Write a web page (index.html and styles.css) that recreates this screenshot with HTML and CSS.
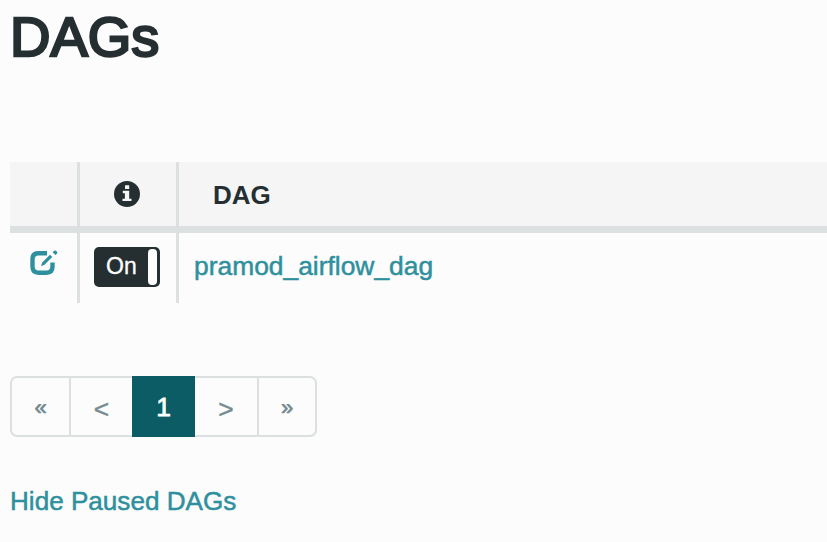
FILE: index.html
```html
<!DOCTYPE html>
<html lang="en">
<head>
<meta charset="utf-8">
<title>DAGs</title>
<link rel="stylesheet" href="styles.css">
</head>
<body>
<h1>DAGs</h1>
<table class="dags">
  <thead>
    <tr>
      <th class="col-edit"></th>
      <th class="col-state"><svg class="info" viewBox="0 0 26 26"><circle cx="13" cy="13" r="13" fill="#252f32"/><path fill="#f5f5f5" d="M11 4.200h4.200v3.800H11zM8.800 9.800h6.400v7.900h2.300V20H8.500v-2.300h2.400v-5.500H8.800z"/></svg></th>
      <th class="col-name">DAG</th>
    </tr>
  </thead>
  <tbody>
    <tr>
      <td><a class="edit" href="#"><svg viewBox="0 0 28 26"><path d="M17 3.200H8.500Q2.500 3.200 2.500 9v7.500q0 6.200 6 6.200h8q6 0 6-6.200V12.500" fill="none" stroke="#2f909d" stroke-width="4.400"/><path d="M11 16.300l1.200-3.800L20 4.700l2.300 2.300-7.800 7.800zM22.600 2.200l1.500-1.400q1-.7 1.900 0l1 1q.7.900 0 1.800L25.500 5z" fill="#2f909d"/></svg></a></td>
      <td><div class="toggle"><span class="on">On</span><span class="handle"></span></div></td>
      <td class="name"><a href="#">pramod_airflow_dag</a></td>
    </tr>
  </tbody>
</table>
<ul class="pagination">
  <li class="edge">«</li>
  <li>&lt;</li>
  <li class="active">1</li>
  <li>&gt;</li>
  <li class="edge">»</li>
</ul>
<a class="hide" href="#">Hide Paused DAGs</a>
</body>
</html>
```
FILE: styles.css
```css
* { box-sizing: border-box; }
body {
  margin: 0;
  padding: 4px 0 0 10px;
  height: 542px;
  overflow: hidden;
  background: #fcfcfc;
  color: #252f32;
  font-family: "Liberation Sans", Arial, sans-serif;
  font-size: 26.4px;
}
a { color: #2f909d; text-decoration: none; -webkit-text-stroke: 0.5px #2f909d; }
h1 {
  margin: 0 0 94px;
  height: 64px;
  font-size: 56px;
  line-height: 65px;
  font-weight: 400;
  -webkit-text-stroke: 2.500px #252f32;
}
.dags { width: 817px; table-layout: fixed; border-collapse: separate; border-spacing: 0; }
th, td { padding: 0; border-left: 3px solid #dce0e1; }
th:first-child, td:first-child { border-left: 0; }
th { height: 71px; background: #f5f5f5; border-bottom: 7px solid #dce0e1; }
td { height: 70px; }
.col-edit { width: 67px; }
.col-state { width: 99px; }
.col-name { padding: 3px 0 0 34px; text-align: left; font-size: 26px; }
.info { display: block; width: 26px; height: 26px; margin: 0 0 0 34px; }
.edit { display: block; margin: -10px 0 0 20px; height: 26px; }
.edit svg { display: block; width: 28px; height: 26px; }
.toggle {
  display: flex;
  justify-content: space-between;
  width: 66px;
  height: 40px;
  margin: -3px 0 0 14px;
  padding: 2px 3px 2px 12px;
  border-radius: 5px;
  background: #252f32;
}
.on { color: #fff; font-size: 23px; line-height: 34px; -webkit-text-stroke: 0.3px #fff; }
.handle { width: 9px; border-radius: 4px; background: #fcfcfc; }
.name { padding: 0 0 4px 15px; }
.pagination {
  display: flex;
  width: 307px;
  height: 61px;
  margin: 73px 0 0;
  padding: 0;
  list-style: none;
  border: 2px solid #dce0e1;
  border-radius: 7px;
  color: #748b90;
  line-height: 63px;
  text-align: center;
  -webkit-text-stroke: 0.4px #748b90;
}
.pagination li { flex: none; width: 63px; border-left: 2px solid #dce0e1; }
.pagination .edge { width: 58px; line-height: 60px; -webkit-text-stroke: 0.7px #748b90; font-size: 22px; }
.pagination .edge:first-child { width: 57px; border-left: 0; }
.pagination .active {
  height: 61px;
  margin-top: -2px;
  border: 0;
  background: #0b5c64;
  color: #fff;
  line-height: 62px;
  -webkit-text-stroke: 0.8px #fff;
}
.pagination .active + li { width: 62px; border-left: 0; }
.hide { display: block; margin-top: 49px; line-height: 30px; font-size: 26.100px; }
```
